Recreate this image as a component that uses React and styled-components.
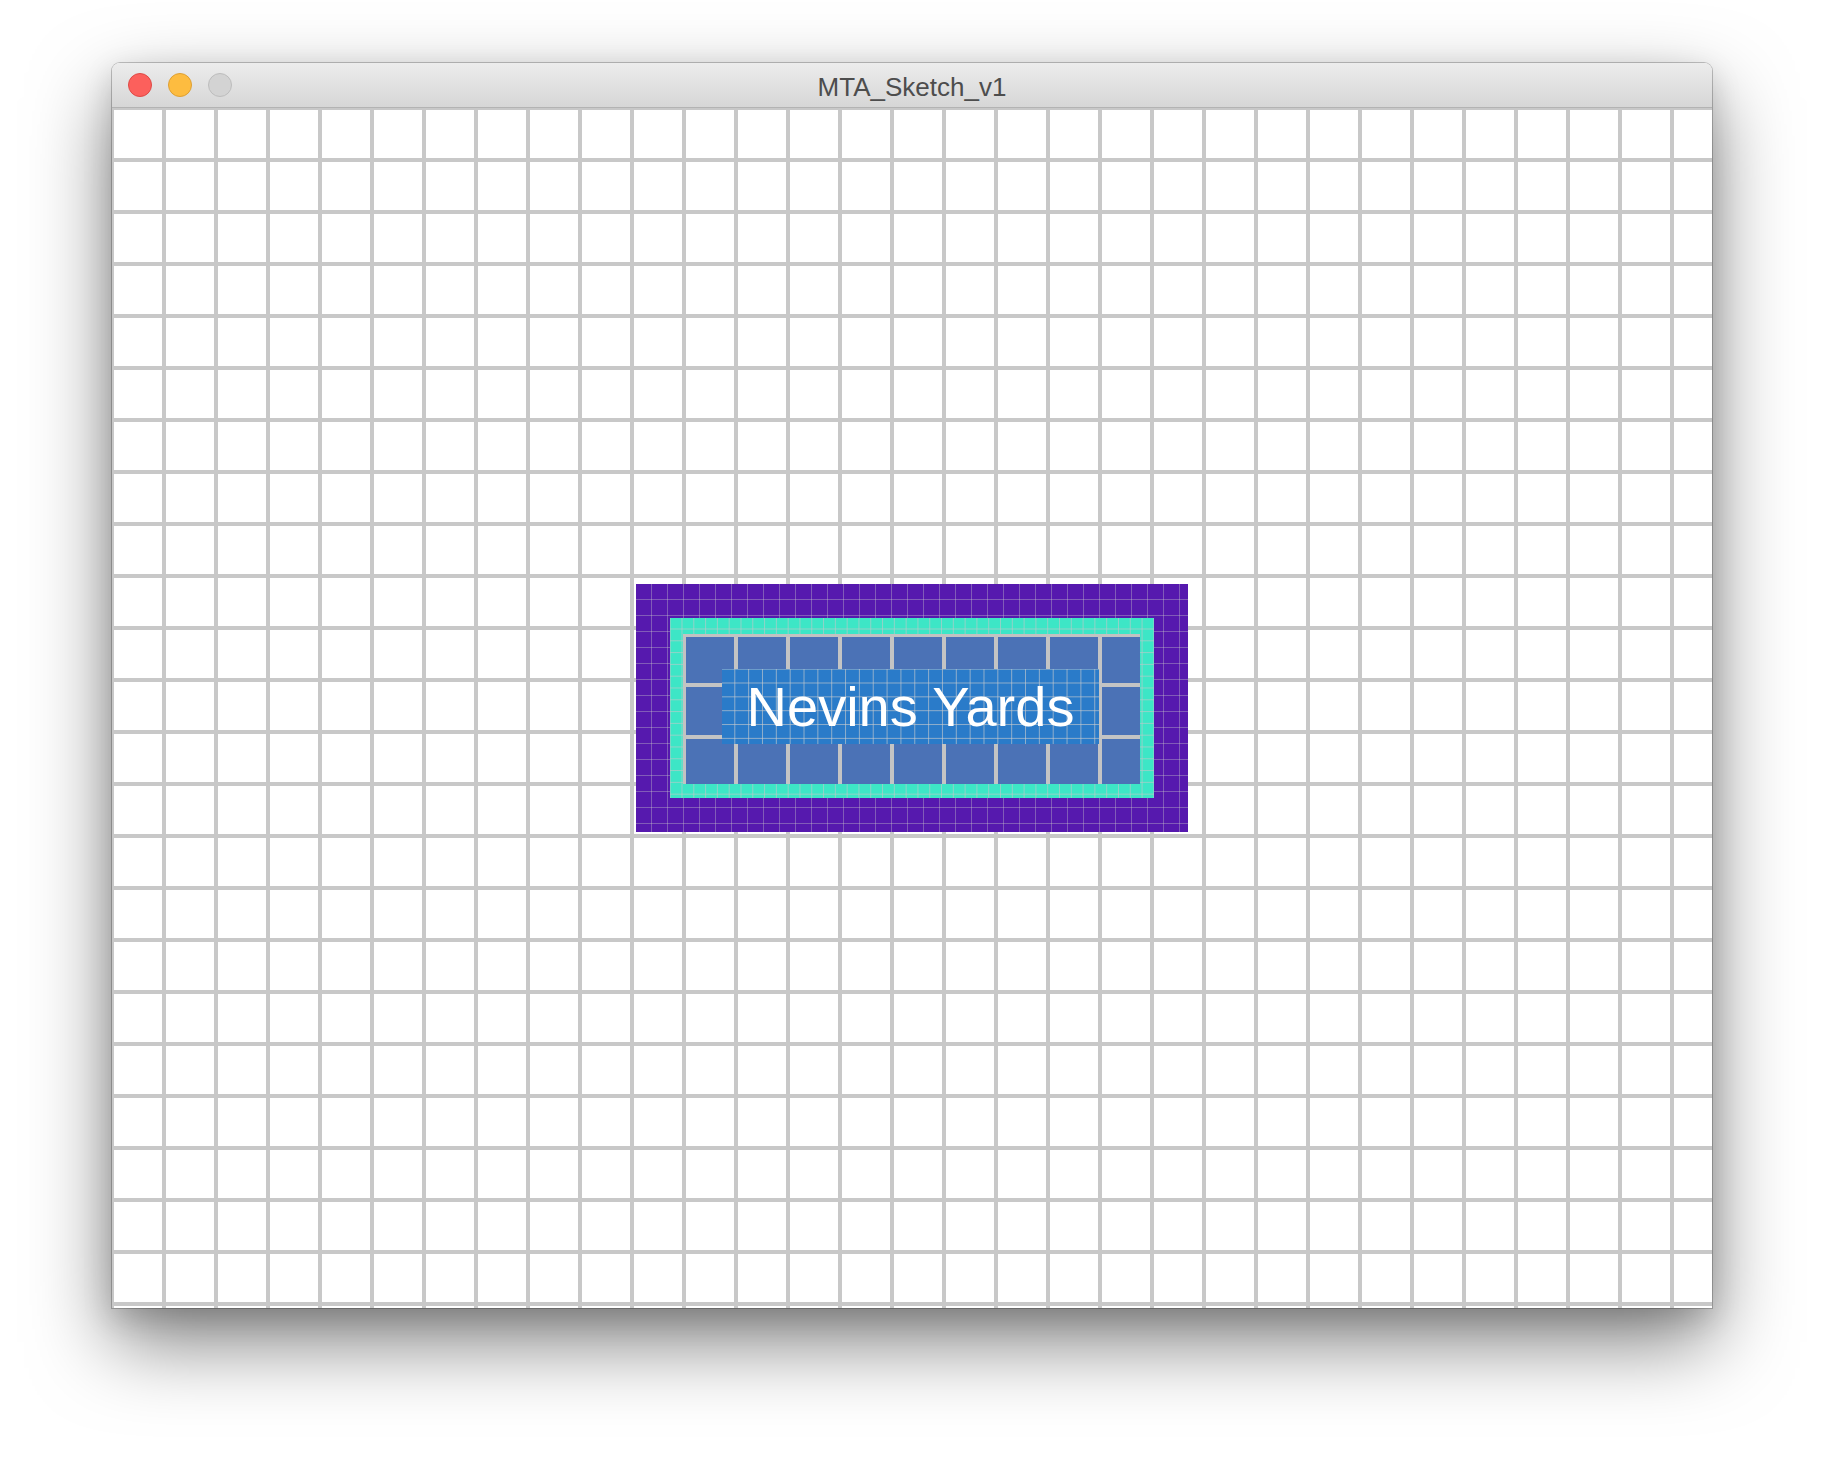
import { createGlobalStyle, styled } from "styled-components";

const GlobalStyle = createGlobalStyle`
  html, body {
    margin: 0;
    padding: 0;
    background: #ffffff;
  }
  body {
    font-family: "Liberation Sans", Arial, sans-serif;
  }
`;

const Page = styled.div`
  width: 1824px;
  height: 1468px;
  padding-top: 63px;
  box-sizing: border-box;
  display: flex;
  justify-content: center;
  align-items: flex-start;
  overflow: hidden;
`;

const Window = styled.div`
  width: 1600px;
  display: flex;
  flex-direction: column;
  border-radius: 8px 8px 0 0;
  box-shadow: 0 0 0 1px rgba(0, 0, 0, 0.22), 0 34px 80px rgba(0, 0, 0, 0.5),
    0 10px 30px rgba(0, 0, 0, 0.15);
  background: #fff;
`;

const TitleBar = styled.div`
  height: 44px;
  border-bottom: 1px solid #b3b3b3;
  border-radius: 8px 8px 0 0;
  background: linear-gradient(#ececec, #d6d6d6);
  display: flex;
  align-items: center;
  position: relative;
  padding-left: 16px;
  gap: 16px;
`;

const Light = styled.span`
  width: 22px;
  height: 22px;
  border-radius: 50%;
  background: ${(p) => p.$fill};
  border: 1px solid ${(p) => p.$edge};
`;

const Title = styled.div`
  position: absolute;
  left: 0;
  right: 0;
  top: 9px;
  text-align: center;
  font-size: 26px;
  line-height: 30px;
  color: #4d4d4d;
  pointer-events: none;
`;

const Canvas = styled.div`
  position: relative;
  height: 1200px;
  background-color: #ffffff;
  background-image: linear-gradient(
      to right,
      #c8c8c8 2px,
      transparent 2px,
      transparent 50px,
      #c8c8c8 50px
    ),
    linear-gradient(
      to bottom,
      #c8c8c8 2px,
      transparent 2px,
      transparent 50px,
      #c8c8c8 50px
    );
  background-size: 52px 52px;
  overflow: hidden;
`;

const fineGrid = (size, offX, offY, color) => `
  background-image:
    linear-gradient(to right, ${color} 1.4px, transparent 1.4px),
    linear-gradient(to bottom, ${color} 1.4px, transparent 1.4px);
  background-size: ${size}px ${size}px;
  background-position: ${offX}px 0, 0 ${offY}px;
`;

// the sign sits on the sketch canvas at its drawn coordinates
const Sign = styled.div`
  position: absolute;
  left: 524px;
  top: 476px;
  width: 552px;
  height: 248px;
  box-sizing: border-box;
  padding: 34px;
  background-color: #5619ae;
  ${fineGrid(16, 15, 15, "rgba(200, 200, 200, 0.38)")}
`;

const Frame = styled.div`
  height: 100%;
  box-sizing: border-box;
  padding: 16px 14px 14px 13px;
  background-color: #3de6c6;
  ${fineGrid(11.8, 11.5, 10.5, "rgba(190, 200, 200, 0.65)")}
`;

const Tiles = styled.div`
  position: relative;
  height: 100%;
  box-sizing: border-box;
  border-top: 3px solid #c2c2c2;
  border-left: 3px solid #c2c2c2;
  background-color: #4b72b6;
  background-image: linear-gradient(
      to right,
      transparent 48px,
      #c4c4c4 48px,
      #c4c4c4 52px,
      transparent 52px
    ),
    linear-gradient(
      to bottom,
      transparent 48px,
      #c4c4c4 48px,
      #c4c4c4 52px,
      transparent 52px
    );
  background-size: 52px 52px;
  background-position: 0 0, 0 -2px;
`;

const Label = styled.div`
  position: absolute;
  left: 36px;
  top: 32px;
  width: 377px;
  height: 75px;
  display: flex;
  align-items: center;
  justify-content: center;
  background-color: #2a7bc9;
  ${fineGrid(13.85, 12.3, 13.5, "rgba(205, 205, 205, 0.62)")}
  color: #ffffff;
  font-size: 56px;
  line-height: 1;
  white-space: nowrap;
`;

const lights = [
  { fill: "#fc605c", edge: "#de4a46" },
  { fill: "#fdbc40", edge: "#dea033" },
  { fill: "#d3d3d3", edge: "#bdbdbd" },
];

export default function App() {
  return (
    <>
      <GlobalStyle />
      <Page>
        <Window>
          <TitleBar>
            {lights.map((l) => (
              <Light key={l.fill} $fill={l.fill} $edge={l.edge} />
            ))}
            <Title>MTA_Sketch_v1</Title>
          </TitleBar>
          <Canvas>
            <Sign>
              <Frame>
                <Tiles>
                  <Label>Nevins Yards</Label>
                </Tiles>
              </Frame>
            </Sign>
          </Canvas>
        </Window>
      </Page>
    </>
  );
}
